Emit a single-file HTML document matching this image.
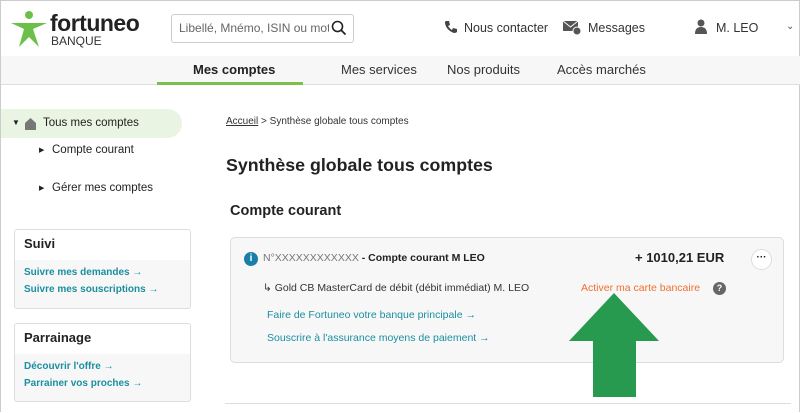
<!DOCTYPE html>
<html><head><meta charset="utf-8"><style>
*{margin:0;padding:0;box-sizing:border-box}
body{width:800px;height:412px;overflow:hidden;background:#fff;font-family:"Liberation Sans",sans-serif;color:#222;position:relative;border:1px solid #ccc;border-bottom:none}
.a{position:absolute;white-space:nowrap}
.lk{color:#1a8fa0}
</style></head><body>
<svg class="a" style="left:8px;top:8px" width="40" height="40" viewBox="0 0 40 40"><circle cx="20" cy="6" r="4" fill="#6cc04a"/><path d="M2 14 L38 14 L24 20 L30 38 L20 28 L10 38 L15 20 Z" fill="#6cc04a"/></svg>
<div class="a" style="left:49px;top:9px;font-size:23px;font-weight:bold;color:#222;letter-spacing:-0.5px">fortuneo</div>
<div class="a" style="left:50px;top:33px;font-size:12px;color:#333">BANQUE</div>
<div class="a" style="left:170px;top:13px;width:183px;height:29px;border:1px solid #ccc;border-radius:3px"></div>
<div class="a" style="left:178px;top:20px;width:150px;overflow:hidden;font-size:12px;color:#666">Libellé, Mnémo, ISIN ou mot</div>
<svg class="a" style="left:330px;top:19px" width="16" height="16"><circle cx="6.5" cy="6.5" r="5" fill="none" stroke="#222" stroke-width="1.6"/><line x1="10" y1="10" x2="14.5" y2="14.5" stroke="#222" stroke-width="1.8"/></svg>
<svg class="a" style="left:443px;top:19px" width="14" height="14"><path d="M2 1 L5 1 L6 5 L4 6 Q6 9 8 10 L9 8 L13 9 L13 12 Q12 13 10 13 Q2 10 1 3 Q1 1 2 1Z" fill="#444"/></svg>
<div class="a" style="left:463px;top:20px;font-size:12.5px;color:#333">Nous contacter</div>
<svg class="a" style="left:561px;top:18px" width="20" height="16"><rect x="1" y="2" width="15" height="10" fill="#555"/><path d="M1 2 L8.5 8 L16 2" stroke="#fff" fill="none"/><circle cx="15" cy="12" r="4" fill="#555" stroke="#fff"/></svg>
<div class="a" style="left:587px;top:20px;font-size:12.5px;color:#333">Messages</div>
<svg class="a" style="left:693px;top:18px" width="14" height="16"><circle cx="7" cy="4" r="3.5" fill="#555"/><path d="M1 15 Q1 8 7 8 Q13 8 13 15Z" fill="#555"/></svg>
<div class="a" style="left:715px;top:20px;font-size:12.5px;color:#333">M. LEO</div>
<div class="a" style="left:785px;top:20px;font-size:10px;color:#555">⌄</div>
<div class="a" style="left:0;top:55px;width:800px;height:29px;background:#f7f7f7;border-bottom:1px solid #ddd"></div>
<div class="a" style="left:156px;top:81px;width:146px;height:3px;background:#7cc04a"></div>
<div class="a" style="left:192px;top:61px;font-size:13px;font-weight:bold;color:#222">Mes comptes</div>
<div class="a" style="left:340px;top:61px;font-size:13px;color:#333">Mes services</div>
<div class="a" style="left:446px;top:61px;font-size:13px;color:#333">Nos produits</div>
<div class="a" style="left:556px;top:61px;font-size:13px;color:#333">Accès marchés</div>
<div class="a" style="left:0;top:108px;width:181px;height:29px;background:#eaf4e2;border-radius:0 15px 15px 0"></div>
<div class="a" style="left:11px;top:117px;font-size:8px">▼</div>
<svg class="a" style="left:23px;top:116px" width="13" height="13"><path d="M1 6 L6.5 1 L12 6 L12 13 L1 13Z" fill="#777"/></svg>
<div class="a" style="left:42px;top:116px;font-size:11.5px">Tous mes comptes</div>
<div class="a" style="left:38px;top:145px;font-size:7px">▶</div>
<div class="a" style="left:51px;top:143px;font-size:11.5px">Compte courant</div>
<div class="a" style="left:38px;top:183px;font-size:7px">▶</div>
<div class="a" style="left:51px;top:181px;font-size:11.5px">Gérer mes comptes</div>
<div class="a" style="left:13px;top:228px;width:177px;height:80px;border:1px solid #ddd;border-radius:3px;background:#f7f7f7;overflow:hidden"><div style="height:30px;background:#fff"></div></div>
<div class="a" style="left:23px;top:235px;font-size:13px;font-weight:bold">Suivi</div>
<div class="a lk" style="left:23px;top:266px;font-size:10px;font-weight:bold">Suivre mes demandes →</div>
<div class="a lk" style="left:23px;top:283px;font-size:10px;font-weight:bold">Suivre mes souscriptions →</div>
<div class="a" style="left:13px;top:322px;width:177px;height:79px;border:1px solid #ddd;border-radius:3px;background:#f7f7f7;overflow:hidden"><div style="height:30px;background:#fff"></div></div>
<div class="a" style="left:23px;top:329px;font-size:13px;font-weight:bold">Parrainage</div>
<div class="a lk" style="left:23px;top:360px;font-size:10px;font-weight:bold">Découvrir l'offre →</div>
<div class="a lk" style="left:23px;top:377px;font-size:10px;font-weight:bold">Parrainer vos proches →</div>
<div class="a" style="left:225px;top:115px;font-size:10px;color:#333"><u>Accueil</u> &gt; Synthèse globale tous comptes</div>
<div class="a" style="left:225px;top:154px;font-size:17.8px;font-weight:bold">Synthèse globale tous comptes</div>
<div class="a" style="left:229px;top:202px;font-size:14.5px;font-weight:bold">Compte courant</div>
<div class="a" style="left:229px;top:236px;width:554px;height:126px;border:1px solid #ddd;border-radius:5px;background:#f7f7f7"></div>
<div class="a" style="left:243px;top:251px;width:14px;height:14px;border-radius:50%;background:#1a7fa8;color:#fff;font-size:10px;font-weight:bold;text-align:center;line-height:14px">i</div>
<div class="a" style="left:262px;top:251px;font-size:10.5px;color:#777">N°XXXXXXXXXXXX <b style="color:#222">- Compte courant M LEO</b></div>
<div class="a" style="left:634px;top:249px;font-size:13px;font-weight:bold">+ 1010,21 EUR</div>
<div class="a" style="left:750px;top:248px;width:21px;height:21px;border-radius:50%;background:#fff;border:1px solid #ddd;font-size:10px;font-weight:bold;text-align:center;line-height:16px">···</div>
<div class="a" style="left:262px;top:281px;font-size:10.5px;color:#333">↳ Gold CB MasterCard de débit (débit immédiat) M. LEO</div>
<div class="a" style="left:580px;top:281px;font-size:10.5px;color:#f07030">Activer ma carte bancaire</div>
<div class="a" style="left:712px;top:281px;width:13px;height:13px;border-radius:50%;background:#666;color:#fff;font-size:9px;font-weight:bold;text-align:center;line-height:13px">?</div>
<div class="a lk" style="left:266px;top:308px;font-size:10.5px">Faire de Fortuneo votre banque principale →</div>
<div class="a lk" style="left:266px;top:331px;font-size:10.5px">Souscrire à l'assurance moyens de paiement →</div>
<div class="a" style="left:224px;top:402px;width:566px;height:1px;background:#ddd"></div>
<svg class="a" style="left:0;top:0" width="800" height="412"><path d="M613 292 L658 340 L635 340 L635 396 L592 396 L592 340 L568 340 Z" fill="#279a4f"/></svg>
</body></html>
